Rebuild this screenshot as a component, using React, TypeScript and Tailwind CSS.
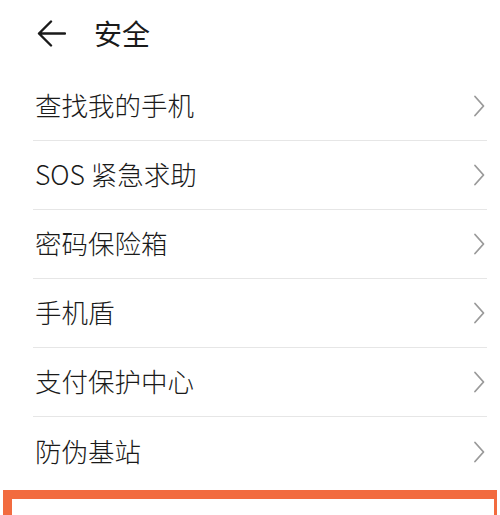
const items = ["查找我的手机", "SOS 紧急求助", "密码保险箱", "手机盾", "支付保护中心", "防伪基站"];

function Chevron() {
  return (
    <svg width="12" height="22" viewBox="0 0 12 22" fill="none" className="shrink-0">
      <path d="M2 1.5 L10.5 11 L2 20.5" stroke="#9a9a9a" strokeWidth="1.8" strokeLinecap="round" strokeLinejoin="round" />
    </svg>
  );
}

export default function App() {
  return (
    <div
      className="w-[500px] h-[515px] overflow-hidden bg-white text-[#1a1a1a]"
      style={{ fontFamily: '"Noto Sans CJK SC", "Noto Sans", sans-serif' }}
    >
      {/* header */}
      <div className="h-[72px] flex items-center pl-[37px] pb-[6px]">
        <svg width="29" height="27" viewBox="0 0 29 27" fill="none">
          <path d="M14 1.5 L2 13.5 L14 25.5 M2 13.5 H28" stroke="#1a1a1a" strokeWidth="2.4" strokeLinecap="round" strokeLinejoin="round" />
        </svg>
        <span className="ml-[28px] text-[28px] leading-none">安全</span>
      </div>

      {/* list */}
      <div className="pl-[33px] pr-[13px]">
        {items.map((t, i) => (
          <div
            key={t}
            className={
              "h-[69px] flex items-center justify-between pl-[2px] pr-[2px] " +
              (i < items.length - 1 ? "border-b border-[#e6e6e6]" : "")
            }
          >
            <span className="text-[26.5px] font-light leading-none pb-[1px]">{t}</span>
            <Chevron />
          </div>
        ))}
      </div>

      {/* highlighted box */}
      <div className="mt-[4px] mx-[3px] h-[40px] border-t-[9px] border-l-[9px] border-r-[3px] border-[#f26b3f] bg-white" />
    </div>
  );
}
